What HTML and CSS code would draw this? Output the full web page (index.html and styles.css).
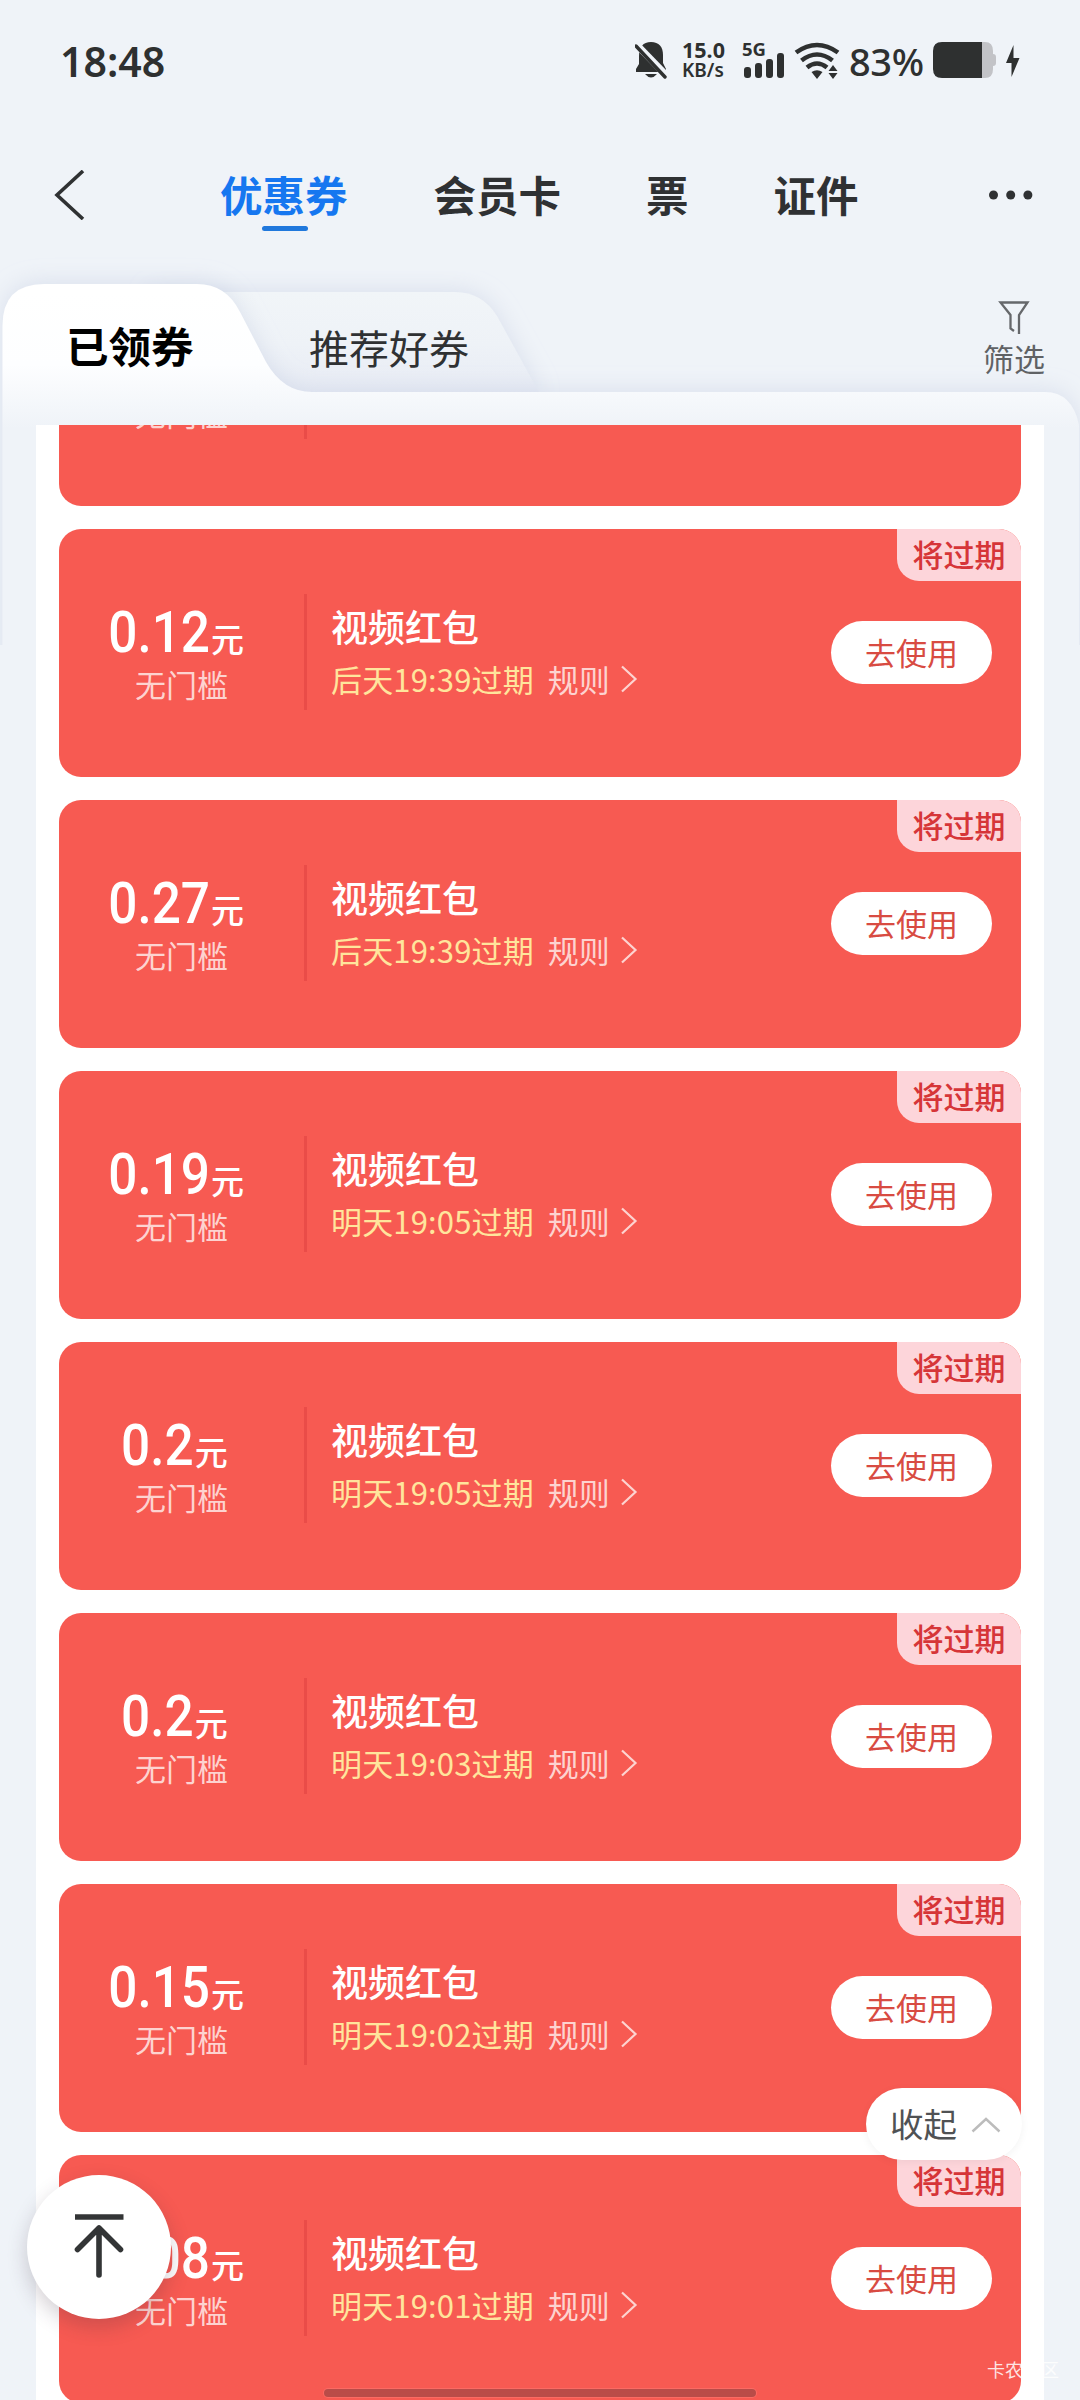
FILE: index.html
```html
<!DOCTYPE html>
<html lang="zh-CN">
<head>
<meta charset="utf-8">
<title>优惠券</title>
<link rel="stylesheet" href="styles.css">
</head>
<body>
<svg class="defs" width="0" height="0" aria-hidden="true">
  <symbol id="chevron" viewBox="0 0 18 28"><path d="M2 1.500 L15.500 14 L2 26.500" fill="none" stroke="currentColor" stroke-width="2.200"/></symbol>
</svg>
<div class="screen">
  <header class="status">
    <span class="time">18:48</span>
    <svg class="ic-bell" width="32" height="38" viewBox="0 0 32 38">
      <path d="M4 15 C4 6 8 1 16 1 C24 1 28 6 28 14 V22 L31 28 V31 H1 V28 L4 23 Z" fill="#2e3030"/>
      <path d="M10 33 H22 Q16 40 10 33 Z" fill="#2e3030"/>
      <path d="M-1 1 L33 36" stroke="#eff3f8" stroke-width="7"/>
      <path d="M1 5 L30 36" stroke="#2e3030" stroke-width="3.400" stroke-linecap="round"/>
    </svg>
    <span class="rate"><b>15.0</b><b class="unit">KB/s</b></span>
    <span class="cell"><b>5G</b>
      <svg width="42" height="26" viewBox="0 0 42 26" fill="#2e3030"><rect x="1" y="15" width="7" height="11" rx="3"/><rect x="12" y="11" width="7" height="15" rx="3"/><rect x="23" y="7" width="7" height="19" rx="3"/><rect x="34" y="1" width="7" height="25" rx="3"/></svg>
    </span>
    <svg class="ic-wifi" width="46" height="38" viewBox="0 0 46 38">
      <g fill="none" stroke="#2e3030" stroke-width="4.600"><path d="M2 10.500 Q23 -4.500 44 10.500"/><path d="M7.500 18.500 Q23 6.500 38.500 18.500"/><path d="M13 25.500 Q23 17.500 33 25.500"/></g>
      <path d="M17.500 30 Q23 26.500 28.500 30 L23 37 Z M39 23 L43.500 29 H34.500 Z M39 37 L43.500 31 H34.500 Z" fill="#2e3030"/>
    </svg>
    <span class="pct">83%</span>
    <svg class="ic-batt" width="64" height="36" viewBox="0 0 64 36"><path d="M49 0 H52 Q60 0 60 9 V12 Q63 12 63 15 V21 Q63 24 60 24 V27 Q60 36 52 36 H49 Z" fill="#c2c3c7"/><path d="M9 0 H49 V36 H9 Q0 36 0 27 V9 Q0 0 9 0 Z" fill="#2e3030"/></svg>
    <svg class="ic-bolt" width="15" height="34" viewBox="0 0 15 34"><path d="M8.500 1 L1 19 H6.500 V33 L14.500 14 H8.500 Z" fill="#2e3030"/></svg>
  </header>

  <nav class="nav">
    <svg class="back" width="32" height="50" viewBox="0 0 32 50"><path d="M29 1 L3 25 L29 49" fill="none" stroke="#2f3133" stroke-width="3.600"/></svg>
    <span class="nav-item on">优惠券</span>
    <span class="nav-item">会员卡</span>
    <span class="nav-item">票</span>
    <span class="nav-item">证件</span>
    <svg class="more" width="46" height="10" viewBox="0 0 46 10" fill="#2f3133"><circle cx="5.500" cy="5" r="4.500"/><circle cx="22.700" cy="5" r="4.500"/><circle cx="39.900" cy="5" r="4.500"/></svg>
  </nav>

  <section class="tabs">
    <svg class="tabs-bg" width="1080" height="395" viewBox="0 0 1080 395">
      <defs>
        <linearGradient id="sheet" x1="0" y1="0" x2="0" y2="425" gradientUnits="userSpaceOnUse"><stop offset="0.100" stop-color="#fff"/><stop offset="0.270" stop-color="#fdfeff"/><stop offset="0.420" stop-color="#eff3f8"/><stop offset="1" stop-color="#eff3f8"/></linearGradient>
        <linearGradient id="second" x1="0" y1="0" x2="0" y2="1"><stop offset="0" stop-color="#f1f5f8"/><stop offset="0.500" stop-color="#eef2f7"/><stop offset="1" stop-color="#e7ebf4"/></linearGradient>
        <filter id="soft" x="-10%" y="-20%" width="120%" height="140%"><feDropShadow dx="0" dy="-2" stdDeviation="11" flood-color="#b9c3dc" flood-opacity="0.400"/></filter>
      </defs>
      <path d="M150 42 H455 Q482 42 497 66 L541 146 H150 Z" fill="url(#second)" filter="url(#soft)"/>
      <path d="M2.500 425 V76 Q2.500 34 44 34 H197 Q226 34 240 62 L266 112 Q283 142 312 142 H1045 Q1072 142 1079 175 V425 Z" fill="url(#sheet)" filter="url(#soft)"/>
    </svg>
    <span class="tab on">已领券</span>
    <span class="tab">推荐好券</span>
    <span class="filter">
      <svg width="32" height="36" viewBox="0 0 32 36"><path d="M21 34 V15 L29.500 2.500 H2.500 L12.500 15 V28.500 L16 31" fill="none" stroke="#66686b" stroke-width="2.300"/></svg>
      筛选
    </span>
  </section>

  <main class="viewport">
    <div class="panel">
      <article class="card"><div class="left"><p class="amount"><b>0.12</b><i>元</i></p><p class="cond">无门槛</p></div><div class="rule-line"></div><div class="info"><h3>视频红包</h3><p><em>后天19:39过期</em><span>规则</span><svg><use href="#chevron"/></svg></p></div><a class="use">去使用</a><span class="badge">将过期</span></article>
      <article class="card"><div class="left"><p class="amount"><b>0.12</b><i>元</i></p><p class="cond">无门槛</p></div><div class="rule-line"></div><div class="info"><h3>视频红包</h3><p><em>后天19:39过期</em><span>规则</span><svg><use href="#chevron"/></svg></p></div><a class="use">去使用</a><span class="badge">将过期</span></article>
      <article class="card"><div class="left"><p class="amount"><b>0.27</b><i>元</i></p><p class="cond">无门槛</p></div><div class="rule-line"></div><div class="info"><h3>视频红包</h3><p><em>后天19:39过期</em><span>规则</span><svg><use href="#chevron"/></svg></p></div><a class="use">去使用</a><span class="badge">将过期</span></article>
      <article class="card"><div class="left"><p class="amount"><b>0.19</b><i>元</i></p><p class="cond">无门槛</p></div><div class="rule-line"></div><div class="info"><h3>视频红包</h3><p><em>明天19:05过期</em><span>规则</span><svg><use href="#chevron"/></svg></p></div><a class="use">去使用</a><span class="badge">将过期</span></article>
      <article class="card"><div class="left"><p class="amount"><b>0.2</b><i>元</i></p><p class="cond">无门槛</p></div><div class="rule-line"></div><div class="info"><h3>视频红包</h3><p><em>明天19:05过期</em><span>规则</span><svg><use href="#chevron"/></svg></p></div><a class="use">去使用</a><span class="badge">将过期</span></article>
      <article class="card"><div class="left"><p class="amount"><b>0.2</b><i>元</i></p><p class="cond">无门槛</p></div><div class="rule-line"></div><div class="info"><h3>视频红包</h3><p><em>明天19:03过期</em><span>规则</span><svg><use href="#chevron"/></svg></p></div><a class="use">去使用</a><span class="badge">将过期</span></article>
      <article class="card"><div class="left"><p class="amount"><b>0.15</b><i>元</i></p><p class="cond">无门槛</p></div><div class="rule-line"></div><div class="info"><h3>视频红包</h3><p><em>明天19:02过期</em><span>规则</span><svg><use href="#chevron"/></svg></p></div><a class="use">去使用</a><span class="badge">将过期</span></article>
      <article class="card"><div class="left"><p class="amount"><b>0.08</b><i>元</i></p><p class="cond">无门槛</p></div><div class="rule-line"></div><div class="info"><h3>视频红包</h3><p><em>明天19:01过期</em><span>规则</span><svg><use href="#chevron"/></svg></p></div><a class="use">去使用</a><span class="badge">将过期</span></article>
    </div>
  </main>

  <a class="collapse">收起<svg width="30" height="16" viewBox="0 0 30 16"><path d="M1.500 14.500 L15 2 L28.500 14.500" fill="none" stroke="#bcbcbc" stroke-width="2.400"/></svg></a>
  <a class="to-top"><svg width="54" height="70" viewBox="0 0 54 70" fill="none" stroke="#333536" stroke-width="5.600"><path d="M3 6 H51.500"/><path d="M27 17 V64 M5.500 38.500 L27 17 L48.500 38.500" stroke-linecap="round" stroke-linejoin="round"/></svg></a>
  <span class="watermark">卡农社区</span>
  <div class="home-bar"></div>
</div>
</body>
</html>
```
FILE: styles.css
```css
* { box-sizing: border-box; margin: 0; padding: 0; }
body { background: #eff3f8; font-family: "Noto Sans CJK SC", "Noto Sans", sans-serif; }
.defs { position: absolute; }
.screen { position: relative; width: 1080px; height: 2400px; overflow: hidden; background: #eff3f8; color: #2e3030; display: flex; flex-direction: column; }

/* status bar */
.status { height: 120px; flex: none; display: flex; align-items: flex-start; padding: 42px 0 0 60px; }
.time { font: 600 41px/41px "Noto Sans", sans-serif; margin-top: -1px; width: 575px; }
.ic-bell { margin-top: -1px; }
.rate { display: flex; flex-direction: column; width: 45px; margin-left: 15px; }
.rate b, .cell b { font: 700 21.5px/18px "Noto Sans", sans-serif; white-space: nowrap; }
.rate b { margin-top: -1px; }
.rate .unit { font-weight: 600; font-size: 19px; line-height: 20px; margin-top: 1px; }
.cell { position: relative; width: 42px; height: 36px; margin-left: 16px; }
.cell b { position: absolute; left: -1px; top: -2px; font-size: 18.5px; }
.cell svg { position: absolute; left: 0; top: 10px; }
.ic-wifi { margin-left: 9px; }
.pct { font: 500 38px/38px "Noto Sans", sans-serif; width: 84px; margin: 0 0 0 9px; letter-spacing: -.4px; }
.ic-bolt { margin: 2px 0 0 8px; }

/* top navigation */
.nav { height: 130px; flex: none; display: flex; align-items: center; padding: 0 46px 0 54px; }
.back { margin: 19px 134px 0 0; }
.nav-item { font-weight: 700; font-size: 42.5px; line-height: 60px; margin: 18px 85px 0 0; position: relative; color: #2f3133; }
.nav-item.on { color: #1677f0; margin-right: 86px; }
.nav-item.on::after { content: ""; position: absolute; left: 42px; bottom: -7px; width: 46px; height: 5px; border-radius: 3px; background: #2078dc; }
.more { margin: 19px 0 0 auto; }

/* ticket tabs */
.tabs { position: relative; height: 175px; flex: none; display: flex; align-items: flex-start; }
.tabs-bg { position: absolute; left: 0; top: 0; }
.tab { position: relative; font-size: 40px; line-height: 60px; margin-top: 67px; color: #2f3133; }
.tab.on { font-weight: 700; font-size: 42.5px; margin: 65px 0 0 66px; width: 243px; color: #000; }
.filter { position: relative; margin: 50px 35px 0 auto; display: flex; flex-direction: column; align-items: center; font-size: 31px; line-height: 40px; color: #606265; gap: 2px; }

/* coupon list */
.viewport { position: relative; height: 1975px; flex: none; overflow: hidden; padding: 0 36px; display: flex; flex-direction: column; justify-content: flex-start; }
.panel { background: #fff; padding: 0 23px; flex: none; display: flex; flex-direction: column; gap: 23px; }
.card { position: relative; height: 248px; flex: none; background: #f75a52; border-radius: 22px; display: flex; align-items: flex-start; overflow: hidden; color: #fff; }
.card:first-child { margin-top: -167px; }
.left { width: 245px; padding-top: 69px; }
.amount { height: 66px; display: flex; justify-content: center; align-items: baseline; padding-right: 22px; }
.amount b { font: 500 57px/69px Roboto, sans-serif; transform: scaleX(.9); transform-origin: right; }
.amount i { font-style: normal; font-weight: 500; font-size: 33px; line-height: 33px; margin-left: 1px; }
.cond { font-size: 31px; line-height: 40px; text-align: center; color: #fdd3d0; }
.rule-line { width: 3px; height: 116px; margin-top: 65px; background: #ea4c48; }
.info { flex: 1; padding: 72px 0 0 24px; }
.info h3 { font-weight: 500; font-size: 37px; line-height: 50px; }
.info p { display: flex; align-items: center; font-size: 31px; line-height: 40px; margin-top: 8px; color: #fdd3d0; }
.info em { font-style: normal; color: #ffe59c; letter-spacing: .15px; }
.info span { margin-left: 14px; }
.info svg { width: 18px; height: 28px; margin: 0 0 0 10px; }
.use { width: 161px; height: 63px; margin: 92px 29px 0 0; border-radius: 32px; background: #fff; color: #d84b42; font-size: 31px; line-height: 61px; text-align: center; }
.badge { position: absolute; right: 0; top: 0; width: 124px; height: 52px; border-radius: 0 0 0 22px; background: #fdd5da; color: #d63538; font-size: 31px; font-weight: 500; line-height: 50px; text-align: center; }

/* floating controls */
.collapse { position: absolute; left: 866px; top: 2088px; width: 156px; height: 72px; border-radius: 36px; background: #fff; box-shadow: 0 2px 8px rgba(0,0,0,.05); display: flex; align-items: center; padding: 0 0 3px 24px; font-size: 33.5px; color: #505254; }
.collapse svg { margin: 4px 0 0 14px; }
.to-top { position: absolute; left: 27px; top: 2175px; width: 144px; height: 144px; border-radius: 50%; background: #fff; box-shadow: 0 8px 20px rgba(60,40,60,.22); display: flex; align-items: center; justify-content: center; }
.to-top svg { margin-top: -2px; }
.watermark { position: absolute; left: 987px; top: 2356px; font-size: 18px; line-height: 26px; color: rgba(255,255,255,.85); }
.home-bar { position: absolute; left: 324px; top: 2389px; width: 432px; height: 8px; border-radius: 4px; background: #b94c48; box-shadow: 0 0 0 1px #fb6b63; }
```
